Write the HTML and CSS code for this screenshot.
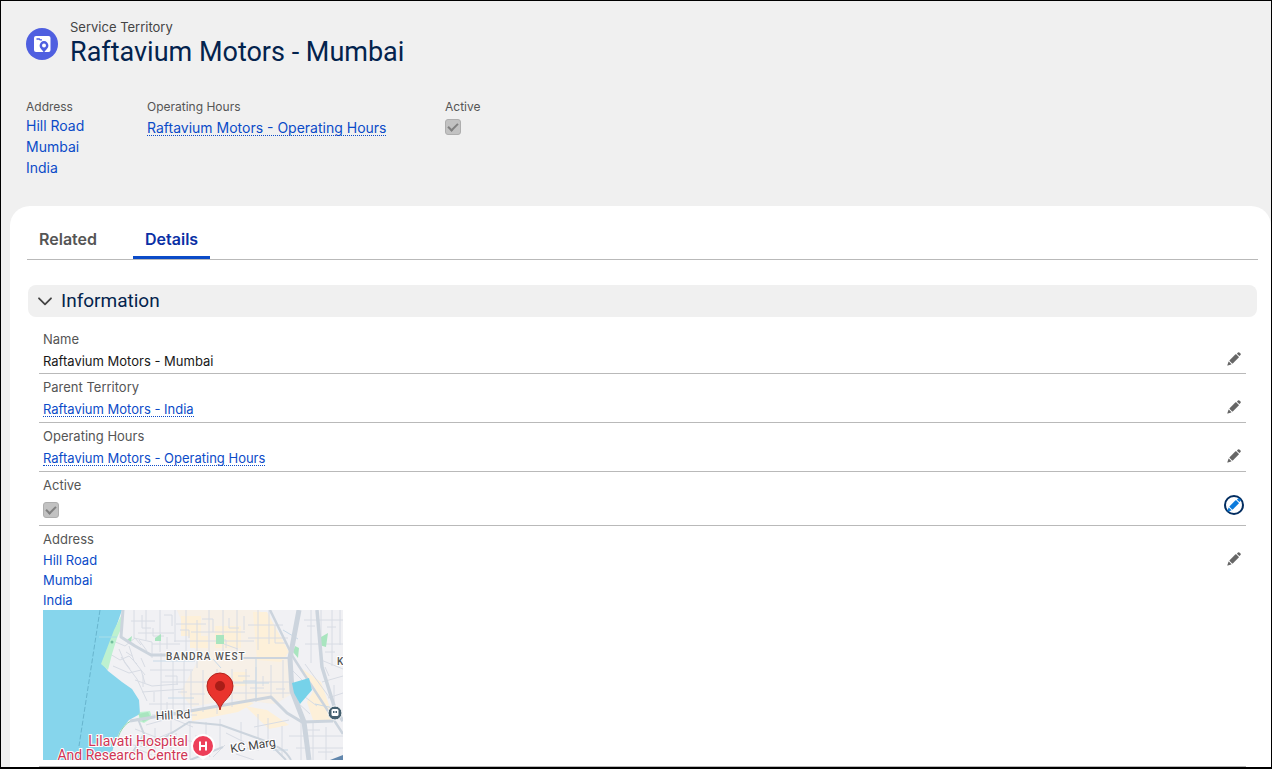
FILE: index.html
```html
<!DOCTYPE html>
<html lang="en">
<head>
<meta charset="utf-8">
<title>Raftavium Motors - Mumbai | Service Territory</title>
<link rel="stylesheet" href="styles.css">
</head>
<body>
<svg class="sprite" aria-hidden="true">
  <symbol id="pencil" viewBox="0 0 14 14">
    <path d="M2.600 8.200 8.500 2.300a.5.5 0 0 1 .7 0l2.500 2.500a.5.5 0 0 1 0 .7L5.800 11.400a.5.5 0 0 1-.7 0L2.600 8.900a.5.5 0 0 1 0-.7z"/>
    <path d="M10.200 1.300l.8-.8a1 1 0 0 1 1.400 0l1.100 1.100a1 1 0 0 1 0 1.400l-.8.8a.4.4 0 0 1-.6 0L10.200 1.900a.4.4 0 0 1 0-.6z"/>
    <path d="M1.500 9.800.4 13.100c-.1.4.1.6.5.5l3.300-1.100a.3.3 0 0 0 .1-.5L2 9.700a.3.3 0 0 0-.5.1z"/>
  </symbol>
</svg>
<div class="page">
  <header class="record-header">
    <div class="identity">
      <svg class="entity-icon" viewBox="0 0 32 32" aria-hidden="true">
        <circle cx="16" cy="16" r="16" fill="#4f5fe0"/>
        <rect x="8" y="8" width="16.500" height="16" rx="2" fill="#fff"/>
        <path d="M10.500 11h2.800l.8.900H16" fill="none" stroke="#4f5fe0" stroke-width="1.300"/>
        <path d="M18 25c-.8-2.700-4.400-4.200-4.400-7.500a4.400 4.400 0 0 1 8.800 0c0 3.300-3.600 4.800-4.400 7.500z" fill="#4f5fe0"/>
        <circle cx="18" cy="17.500" r="2" fill="#fff"/>
      </svg>
      <div class="titles">
        <p class="entity">Service Territory</p>
        <h1>Raftavium Motors - Mumbai</h1>
      </div>
    </div>
    <div class="highlights">
      <div class="highlight">
        <span class="caption">Address</span>
        <a class="address" href="#map">Hill Road<br>Mumbai<br>India</a>
      </div>
      <div class="highlight">
        <span class="caption">Operating Hours</span>
        <a class="lookup" href="#hours">Raftavium Motors - Operating Hours</a>
      </div>
      <div class="highlight">
        <label class="caption" for="active-top">Active</label>
        <input class="check" type="checkbox" id="active-top" checked disabled>
      </div>
    </div>
  </header>

  <main class="card">
    <nav class="tabs">
      <a class="tab" href="#related">Related</a>
      <a class="tab current" href="#details" aria-current="page">Details</a>
    </nav>
    <section class="details">
      <h2><button class="section-toggle" type="button" aria-expanded="true">
        <svg class="chevron" viewBox="0 0 14 9" aria-hidden="true"><path d="M1 1.300 7 7.300 13 1.300" fill="none" stroke="#444" stroke-width="1.800" stroke-linecap="round" stroke-linejoin="round"/></svg>
        Information</button></h2>
      <div class="fields">
        <div class="field">
          <div class="content"><span class="label">Name</span><span class="value">Raftavium Motors - Mumbai</span></div>
          <button class="edit" type="button" aria-label="Edit Name"><svg><use href="#pencil"/></svg></button>
        </div>
        <div class="field">
          <div class="content"><span class="label">Parent Territory</span><a class="value lookup" href="#parent">Raftavium Motors - India</a></div>
          <button class="edit" type="button" aria-label="Edit Parent Territory"><svg><use href="#pencil"/></svg></button>
        </div>
        <div class="field" id="hours">
          <div class="content"><span class="label">Operating Hours</span><a class="value lookup" href="#hours">Raftavium Motors - Operating Hours</a></div>
          <button class="edit" type="button" aria-label="Edit Operating Hours"><svg><use href="#pencil"/></svg></button>
        </div>
        <div class="field">
          <div class="content"><label class="label" for="active">Active</label><input class="check spaced" type="checkbox" id="active" checked disabled></div>
          <button class="edit focused" type="button" aria-label="Edit Active"><svg><use href="#pencil"/></svg></button>
        </div>
        <div class="field">
          <div class="content">
            <span class="label">Address</span>
            <a class="value address" href="#map">Hill Road<br>Mumbai<br>India</a>
            <svg class="map" id="map" viewBox="0 0 300 150" role="img" aria-label="Map of Bandra West">
              <rect width="300" height="150" fill="#f1f1f4"/>
              <g fill="#fdf0d9">
                <path d="M134 0h82l24 30 12 52-20 12-43-5-40 8-12-14 20-36-12-20z" opacity=".5"/>
                <path d="M138 6h20v20h-20zM147 26h18v12h-18zM172 16h26v22h-26zM210 2h14l22 40-8 10-24-2zM258 58l20 14 14 40-22-2-6-18 8-14zM149 101l50-11 12 3-16 9-46 9zM202 96l22 4 22 15-20 4zM190 62h14v14h-14z"/>
              </g>
              <g fill="none" stroke="#d8dce4" stroke-width="1">
                <path d="M91 0v28l18 4v16M103 0v30M117 0v42M88 11h24M95 23h36M109 34h28M132 0v32M143 0v50M154 10v48M166 0v50M180 0v45M194 0v47M133 14h30M131 31h80M148 22h54M70 31l12 5 10-8 6 7M67 44l10 6 9-4 8 8M70 56l16 7 12-3 4 13M76 39l6 14 12 16 10 22M86 36l5 15 11 14M92 70l17 6 26-2M99 82l42-3M118 43v66M130 48v58M141 50v55M107 60h43M118 72h130M148 61v40M160 60v42M174 59v45M189 59v38M190 83h60M203 59v31M213 57v35M228 55v34M240 50v38M147 84h15M106 94h50M109 105h45M103 115l25-7 22 9M92 119l23 9 19-8M112 118v32M128 110v40M147 113v36M163 112v28M177 109v30M183 123l18 9M198 112v24M215 104v26M211 117l35-7M225 108v28M239 116v31M246 126h54M258 110v40M270 111v39M283 117v33M253 138h47M261 10h39M268 0v53M278 0v49M289 0v56M297 0v35M262 34h38M278 50l22 9M279 72l21-6M285 88l15-5M291 75v34M262 54l27 37M250 61l13 13M258 84l16 12M254 92l13 12M84 134l18 3 15-8M77 146l20-6 12 5M140 130l20 3 7 14M170 147l12-12M193 144l18 6M205 15h35M205 28h40M215 0v40M226 0v34"/>
                <path d="M99 5v13h9M110 18v8h11M121 5h8v11M96 30l8 11M124 27v12M137 20h9v8M159 9h11v13M186 8v10h10M174 30h9v8M181 34l14 5M201 6v14M232 15v18h12M83 42l6 4M78 47l9 12M98 48l4 9M100 65v12M111 82v10M122 66h12v9M135 82h9M124 92v10M195 66h12M207 78h14M220 66v10M233 79h9M120 134h12M133 123v12M152 126h15M204 138l12 2M262 120h15M275 142h15M264 16h8M284 17h9M282 42h10M286 66l-4-9"/>
                <path d="M110 51h42M125 88h26M174 73h52M213 49v41M240 20l15 9M272 94l23 5M230 140h15M170 49l8 9M200 71h13" stroke="#c8d9e7"/>
              </g>
              <path fill="#86d5ec" d="M0 0h79l-8 23-12 30 6 8 14 11 10 7 7 11 1 14-11 6-9 11-6 14-4 15H0z"/>
              <path fill="#bdf1d0" d="M79 4 71 20 58 54 65 60 69 44 74 28 80 14zM97 102l10-1 2 7-8 5-6-2z"/>
              <path fill="#a9e5bf" d="M84 30l5-4-1 6zM112 28l6-4v7h-6zM173 25h8v9h-8zM278 27l7-4-2 14-7-2zM252 36l4 2-1 10-5-6zM95 104l10-2 3 6-8 4z"/>
              <circle cx="69" cy="32" r="1.500" fill="#73bf9d"/>
              <path d="M56 27h18" stroke="#a8dfea" fill="none"/>
              <path d="M95 109C84 110 77 119 74 131" fill="none" stroke="#8dd9ac"/>
              <path d="M57 0 36 136" fill="none" stroke="#68b5ce" stroke-dasharray="5 2"/>
              <g fill="none" stroke="#ccd4dd" stroke-linejoin="round">
                <path d="M80 0 78 27 92 36 108 45 125 45" stroke-width="3"/>
                <path d="M198 48h50" stroke-width="2"/>
                <path d="M87 111 147 101 228 87 244 103 259 112 290 111" stroke-width="3"/>
                <path d="M227 0 250 47 300 124" stroke-width="2.500"/>
                <path d="M256 0 247 48 249 81 261 112 266 150" stroke-width="5"/>
                <path d="M274 0 279 57 292 99 300 111" stroke-width="3.500"/>
                <path d="M95 109 101 124 88 145M98 133 121 128 146 112 178 115 225 132 243 150M147 150 180 137M225 135C237 135 244 143 248 150" stroke-width="2"/>
              </g>
              <path fill="#76d2e9" d="M249 73 266 68 269 80 257 94 251 83z"/>
              <path fill="#6287ad" d="M287 150 300 145v5z"/>
              <g class="map-text">
                <text x="123" y="50" class="district">BANDRA WEST</text>
                <text x="294" y="55" class="district">K</text>
                <text x="113" y="110" class="road" transform="rotate(-3 113 110)">Hill Rd</text>
                <text x="188" y="143" class="road" transform="rotate(-9 188 143)">KC Marg</text>
                <text x="145" y="136" text-anchor="end" class="hospital">Lilavati Hospital</text>
                <text x="145" y="150" text-anchor="end" class="hospital">And Research Centre</text>
              </g>
              <path d="M148 136a12 12 0 1 1 24 0c0 7-8 10-12 14-4-4-12-7-12-14z" fill="#fff"/>
              <circle cx="160" cy="136" r="10" fill="#ed3f59"/>
              <path d="M157 131.500v9M163 131.500v9M157 136h6" stroke="#fff" stroke-width="2" fill="none"/>
              <path d="M177 100c-1-9-13-13-13-24a13 13 0 0 1 26 0c0 11-12 15-13 24z" fill="#e9342d" stroke="#b4231c"/>
              <circle cx="177" cy="76" r="5" fill="#a91d17"/>
              <circle cx="292" cy="103" r="7" fill="#45606f" stroke="#fff"/>
              <rect x="288.500" y="99" width="7" height="7" rx="1.500" fill="#fff"/>
              <path d="M290 101h1.500v2H290zM292.500 101h1.500v2h-1.500z" fill="#45606f"/>
            </svg>
          </div>
          <button class="edit" type="button" aria-label="Edit Address"><svg><use href="#pencil"/></svg></button>
        </div>
      </div>
    </section>
  </main>
</div>
</body>
</html>
```
FILE: styles.css
```css
* { box-sizing: border-box; }
body {
  margin: 0;
  font-family: Inter, "Liberation Sans", sans-serif;
  font-size: 13px;
  color: #181818;
}
h1, h2, p { margin: 0; font-weight: 400; }
a { color: #0b4bc8; text-decoration: none; }
button { font: inherit; background: none; border: 0; padding: 0; cursor: pointer; }
.sprite { display: none; }
.page {
  height: 100vh;
  overflow: hidden;
  border: 1px solid #000;
  border-bottom-width: 2px;
  background: #f0f0f0;
}
.record-header { padding: 18px 25px 28px; }
.identity { display: flex; gap: 12px; align-items: center; }
.entity-icon { width: 32px; height: 32px; }
.entity { font-size: 13px; line-height: 16px; color: #444; }
h1 { font-family: Roboto, sans-serif; font-size: 27px; line-height: 34px; color: #03234d; }
.highlights { display: grid; grid-template-columns: 121px 298px auto; padding-top: 30px; }
.highlight { display: flex; flex-direction: column; align-items: flex-start; }
.caption { font-size: 12px; line-height: 16px; color: #555; }
.highlight .address { font-size: 14px; line-height: 21px; }
.highlight .lookup { font-size: 14px; line-height: 15px; margin-top: 5px; }
.lookup { border-bottom: 1px dotted currentColor; }
.check {
  appearance: none;
  width: 16px;
  height: 16px;
  margin: 4px 0 0;
  border: 1px solid #aeaeae;
  border-radius: 3px;
  background: #c2c2c2;
  display: grid;
  place-items: center;
}
.check::after {
  content: "";
  width: 8px;
  height: 4px;
  border: solid #808080;
  border-width: 0 0 2px 2px;
  transform: rotate(-45deg);
  margin-bottom: 2px;
}
.card {
  margin-left: 9px;
  padding: 16px 13px 0 17px;
  border-radius: 20px 20px 0 0;
  background: #fff;
}
.tabs { display: flex; gap: 24px; border-bottom: 1px solid #b9b9b9; }
.tab {
  padding: 0 12px;
  font-size: 16px;
  font-weight: 600;
  line-height: 34px;
  color: #555;
  border-bottom: 3px solid transparent;
}
.current { color: #0a2fa5; border-color: #0b4bc8; }
.details { padding: 25px 1px 0; }
.section-toggle {
  display: flex;
  align-items: center;
  gap: 9px;
  width: 100%;
  padding: 0 10px;
  border-radius: 8px;
  background: #f0f0f0;
  font-family: Roboto, sans-serif;
  font-size: 19px;
  line-height: 32px;
  color: #03234d;
}
.chevron { width: 14px; height: 9px; }
.fields { padding: 12px 11px 0; }
.field {
  display: flex;
  justify-content: space-between;
  padding: 0 2px 0 4px;
  margin-bottom: 3px;
  border-bottom: 1px solid #b9b9b9;
}
.content { display: flex; flex-direction: column; align-items: flex-start; }
.label { line-height: 20px; color: #555; }
.value { line-height: 14px; margin: 5px 0; }
.spaced { margin: 7px 0; }
.content .address { line-height: 20px; margin: 1px 0 0; }
.edit {
  width: 20px;
  height: 20px;
  margin-top: 20px;
  display: grid;
  place-items: center;
  border-radius: 50%;
  color: #666;
}
.edit svg { width: 14px; height: 14px; fill: currentColor; }
.focused { border: 2px solid #032d60; color: #0b7bdc; }
.map { display: block; width: 300px; height: 150px; margin-bottom: 6px; }
.map-text { font-family: Roboto, sans-serif; paint-order: stroke; stroke: #fff; stroke-width: 2px; }
.district { font-size: 10px; font-weight: 500; letter-spacing: 1px; fill: #555; }
.road { font-size: 12px; fill: #444; }
.hospital { font-size: 14px; fill: #cf3655; }
```
